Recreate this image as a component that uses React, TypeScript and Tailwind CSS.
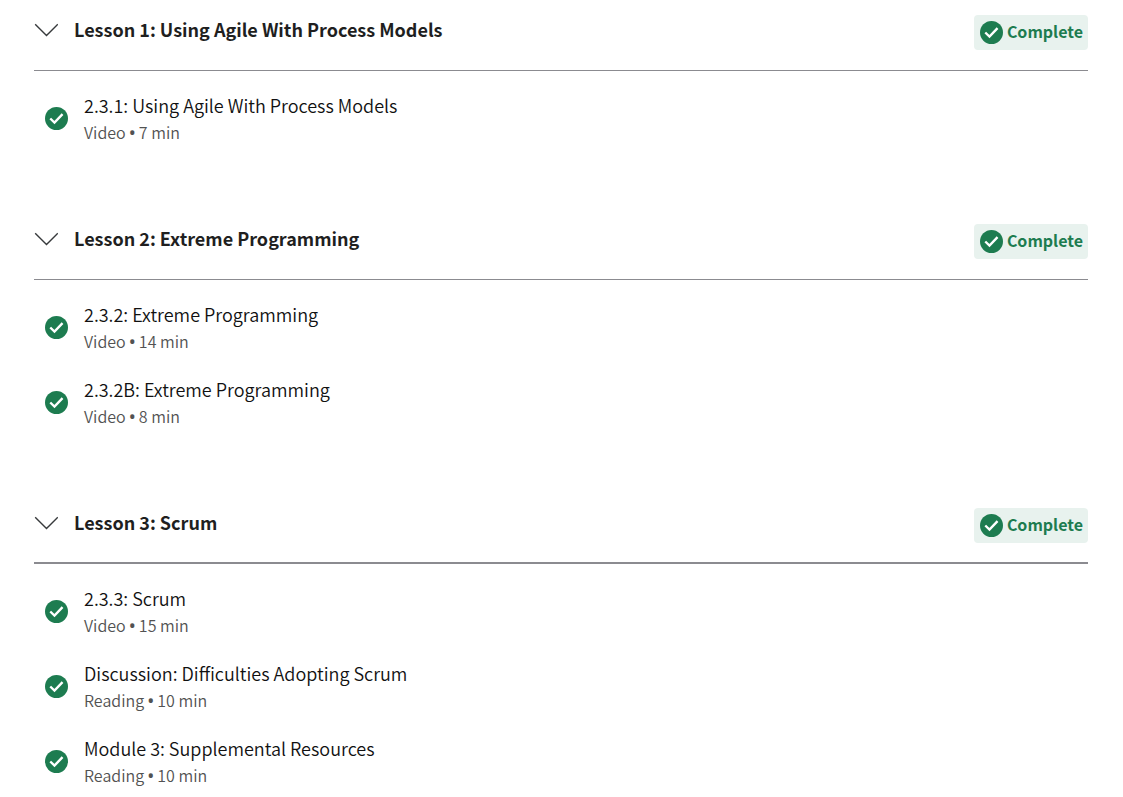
type Item = { title: string; kind: string; minutes: number };
type Lesson = { title: string; items: Item[] };

const lessons: Lesson[] = [
  {
    title: "Lesson 1: Using Agile With Process Models",
    items: [{ title: "2.3.1: Using Agile With Process Models", kind: "Video", minutes: 7 }],
  },
  {
    title: "Lesson 2: Extreme Programming",
    items: [
      { title: "2.3.2: Extreme Programming", kind: "Video", minutes: 14 },
      { title: "2.3.2B: Extreme Programming", kind: "Video", minutes: 8 },
    ],
  },
  {
    title: "Lesson 3: Scrum",
    items: [
      { title: "2.3.3: Scrum", kind: "Video", minutes: 15 },
      { title: "Discussion: Difficulties Adopting Scrum", kind: "Reading", minutes: 10 },
      { title: "Module 3: Supplemental Resources", kind: "Reading", minutes: 10 },
    ],
  },
];

function CheckCircle() {
  return (
    <svg viewBox="0 0 24 24" className="size-[23px] shrink-0" aria-hidden="true">
      <circle cx="12" cy="12" r="12" fill="#1d7c50" />
      <path d="M5.5 12l4.4 4.2 8.4-8.7" fill="none" stroke="#fff" strokeWidth="2.5" />
    </svg>
  );
}

function Chevron() {
  return (
    <svg viewBox="0 0 24 24" className="size-6 shrink-0" aria-hidden="true">
      <path d="M1.2 6.3l11.3 11.2 11.3-11.2" fill="none" stroke="#373a3c" strokeWidth="1.4" />
    </svg>
  );
}

export default function App() {
  return (
    <main className="flex flex-col gap-[65px] bg-white pl-[34px] pr-[35px] pt-3 font-['Noto_Sans_CJK_SC',sans-serif] text-[#1f1f1f]">
      {lessons.map((lesson) => (
        <section key={lesson.title} className="group">
          <div className="flex h-[59px] items-start justify-between border-b border-[#8b8b90] group-last:border-b-2">
            <h2>
              <button type="button" aria-expanded="true" className="flex h-9 items-center gap-4 text-left text-[18px] font-bold leading-6">
                <Chevron />
                <span className="pb-0.5">{lesson.title}</span>
              </button>
            </h2>
            <span className="mt-[3px] flex h-[35px] items-center gap-1 rounded bg-[#e8f2ee] pl-1.5 pr-[5px] text-[16px] font-bold leading-6 text-[#1d7c50]">
              <CheckCircle />
              <span className="pb-1">Complete</span>
            </span>
          </div>
          <ul className="flex flex-col pt-[10px]">
            {lesson.items.map((item) => (
              <li key={item.title}>
                <a href="#" className="flex h-[75px] items-center gap-4 pl-[11px]">
                  <CheckCircle />
                  <span className="flex flex-col pt-0.5">
                    <span className="text-[18px] font-[350] leading-[27px] text-[#111111]">{item.title}</span>
                    <span className="text-[16px] font-[350] leading-[27px] text-[#525252]">
                      {item.kind} <span className="font-['Noto_Sans',sans-serif] font-semibold">•</span> {item.minutes} min
                    </span>
                  </span>
                </a>
              </li>
            ))}
          </ul>
        </section>
      ))}
    </main>
  );
}
